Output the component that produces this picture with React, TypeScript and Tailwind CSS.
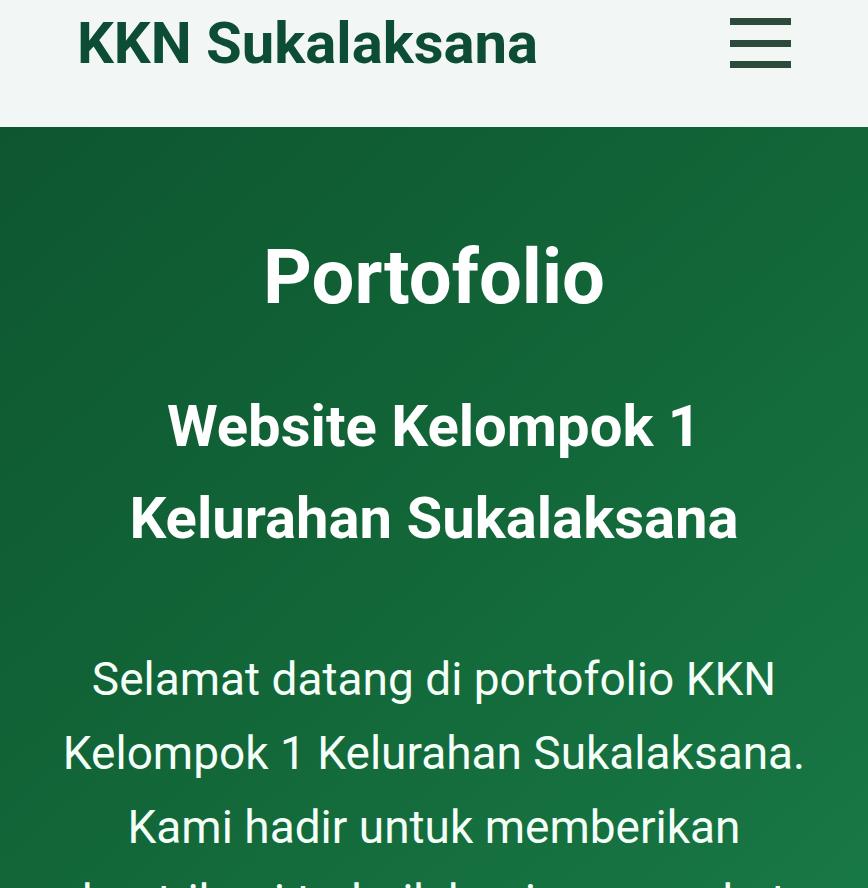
import React from "react";

export default function App() {
  return (
    <div
      className="w-[868px] h-[888px] overflow-hidden"
      style={{ fontFamily: "Roboto, 'Noto Sans', sans-serif" }}
    >
      <header className="h-[127px] bg-[#f2f6f4] flex items-start justify-between pl-[77px] pr-[77px]">
        <h1 className="mt-[8px] text-[58px] leading-[70px] font-bold text-[#0e4d35]">
          KKN Sukalaksana
        </h1>
        <button className="mt-[18px] w-[61px] flex flex-col gap-[14.5px]" aria-label="menu">
          <span className="block h-[7px] w-full bg-[#2c4b3b]" />
          <span className="block h-[7px] w-full bg-[#2c4b3b]" />
          <span className="block h-[7px] w-full bg-[#2c4b3b]" />
        </button>
      </header>
      <section className="h-[761px] bg-gradient-to-br from-[#0e5630] via-[#126638] to-[#187845] text-white text-center pt-[105px]">
        <h2 className="text-[76px] leading-[91px] font-bold">Portofolio</h2>
        <h3 className="mt-[57px] text-[58px] leading-[92px] font-bold">
          Website Kelompok 1
          <br />
          Kelurahan Sukalaksana
        </h3>
        <p className="mt-[78px] text-[46px] leading-[74px] font-normal text-[#f4fff8]">
          Selamat datang di portofolio KKN
          <br />
          Kelompok 1 Kelurahan Sukalaksana.
          <br />
          Kami hadir untuk memberikan
          <br />
          kontribusi terbaik bagi masyarakat
        </p>
      </section>
    </div>
  );
}
